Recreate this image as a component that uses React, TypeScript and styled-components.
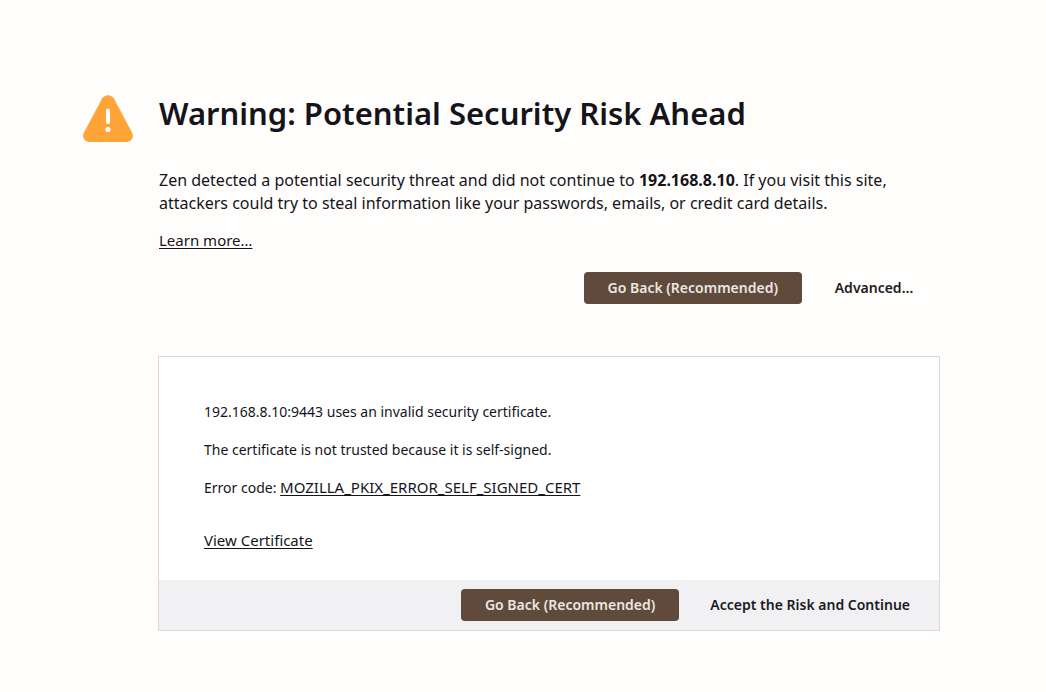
import React from "react";
import styled, { createGlobalStyle } from "styled-components";

const GlobalStyle = createGlobalStyle`
  * { box-sizing: border-box; }
  body {
    margin: 0;
    background: #fffefc;
    color: #15141a;
    font-family: "Noto Sans", sans-serif;
    font-size: 14px;
    line-height: 23px;
  }
`;

const Page = styled.main`
  display: flex;
  gap: 25px;
  padding: 92px 106px 61px 83px;
`;

const WarningIcon = styled.svg`
  flex: none;
  width: 50px;
  height: 48px;
  margin-top: 3px;
`;

const Content = styled.div`
  flex: 1;
  min-width: 0;
`;

const Summary = styled.section`
  padding: 0 1px;
`;

const Title = styled.h1`
  margin: 0 0 35px;
  font-size: 31px;
  line-height: 42px;
  font-weight: 600;
`;

const Lead = styled.p`
  margin: 0 0 14px;
  font-size: 16px;
  line-height: 23px;
`;

const TextLink = styled.a`
  color: inherit;
  font-size: 15px;
  text-decoration: underline;
  text-underline-offset: 2px;
`;

const Actions = styled.div`
  display: flex;
  justify-content: flex-end;
  gap: 7px;
`;

const SummaryActions = styled(Actions)`
  margin-top: 20px;
`;

const Button = styled.button<{ $primary?: boolean }>`
  min-width: 130px;
  height: 32px;
  padding: 0 24px 1px;
  border: 0;
  border-radius: 4px;
  background: ${(p) => (p.$primary ? "#604a3b" : "transparent")};
  color: ${(p) => (p.$primary ? "#ece6e2" : "#1b1b1d")};
  font: inherit;
  font-weight: 600;
  cursor: pointer;
`;

const Panel = styled.section`
  margin-top: 52px;
  border: 1px solid #ded8d3;
  background: #fff;
`;

const Details = styled.div`
  padding: 43px 45px 28px;
`;

const Detail = styled.p`
  margin: 0 0 15px;
`;

const CertificateLine = styled.p`
  margin: 30px 0 0;
`;

const PanelActions = styled(Actions)`
  padding: 9px 5px;
  background: #f1f1f4;
`;

export default function App() {
  return (
    <>
      <GlobalStyle />
      <Page>
        <WarningIcon viewBox="0 0 50 48" aria-hidden="true">
          <path
            d="M18.8 3.9C21.5-1 28.5-1 31.2 3.9L49 37.5C51.4 42 48.5 47 43.5 47H6.5C1.5 47-1.4 42 1 37.5Z"
            fill="#ffa436"
          />
          <path d="M25 15.5v11.5" stroke="#fff" strokeWidth="4" strokeLinecap="round" />
          <circle cx="25" cy="34.5" r="2.5" fill="#fff" />
        </WarningIcon>
        <Content>
          <Summary>
            <Title>Warning: Potential Security Risk Ahead</Title>
            <Lead>
              Zen detected a potential security threat and did not continue to <strong>192.168.8.10</strong>. If you
              visit this site, attackers could try to steal information like your passwords, emails, or credit card
              details.
            </Lead>
            <TextLink href="#learn-more">Learn more…</TextLink>
            <SummaryActions>
              <Button type="button" $primary>Go Back (Recommended)</Button>
              <Button type="button">Advanced…</Button>
            </SummaryActions>
          </Summary>
          <Panel>
            <Details>
              <Detail>192.168.8.10:9443 uses an invalid security certificate.</Detail>
              <Detail>The certificate is not trusted because it is self-signed.</Detail>
              <Detail>
                Error code: <TextLink href="#error-code">MOZILLA_PKIX_ERROR_SELF_SIGNED_CERT</TextLink>
              </Detail>
              <CertificateLine>
                <TextLink href="#certificate">View Certificate</TextLink>
              </CertificateLine>
            </Details>
            <PanelActions>
              <Button type="button" $primary>Go Back (Recommended)</Button>
              <Button type="button">Accept the Risk and Continue</Button>
            </PanelActions>
          </Panel>
        </Content>
      </Page>
    </>
  );
}
